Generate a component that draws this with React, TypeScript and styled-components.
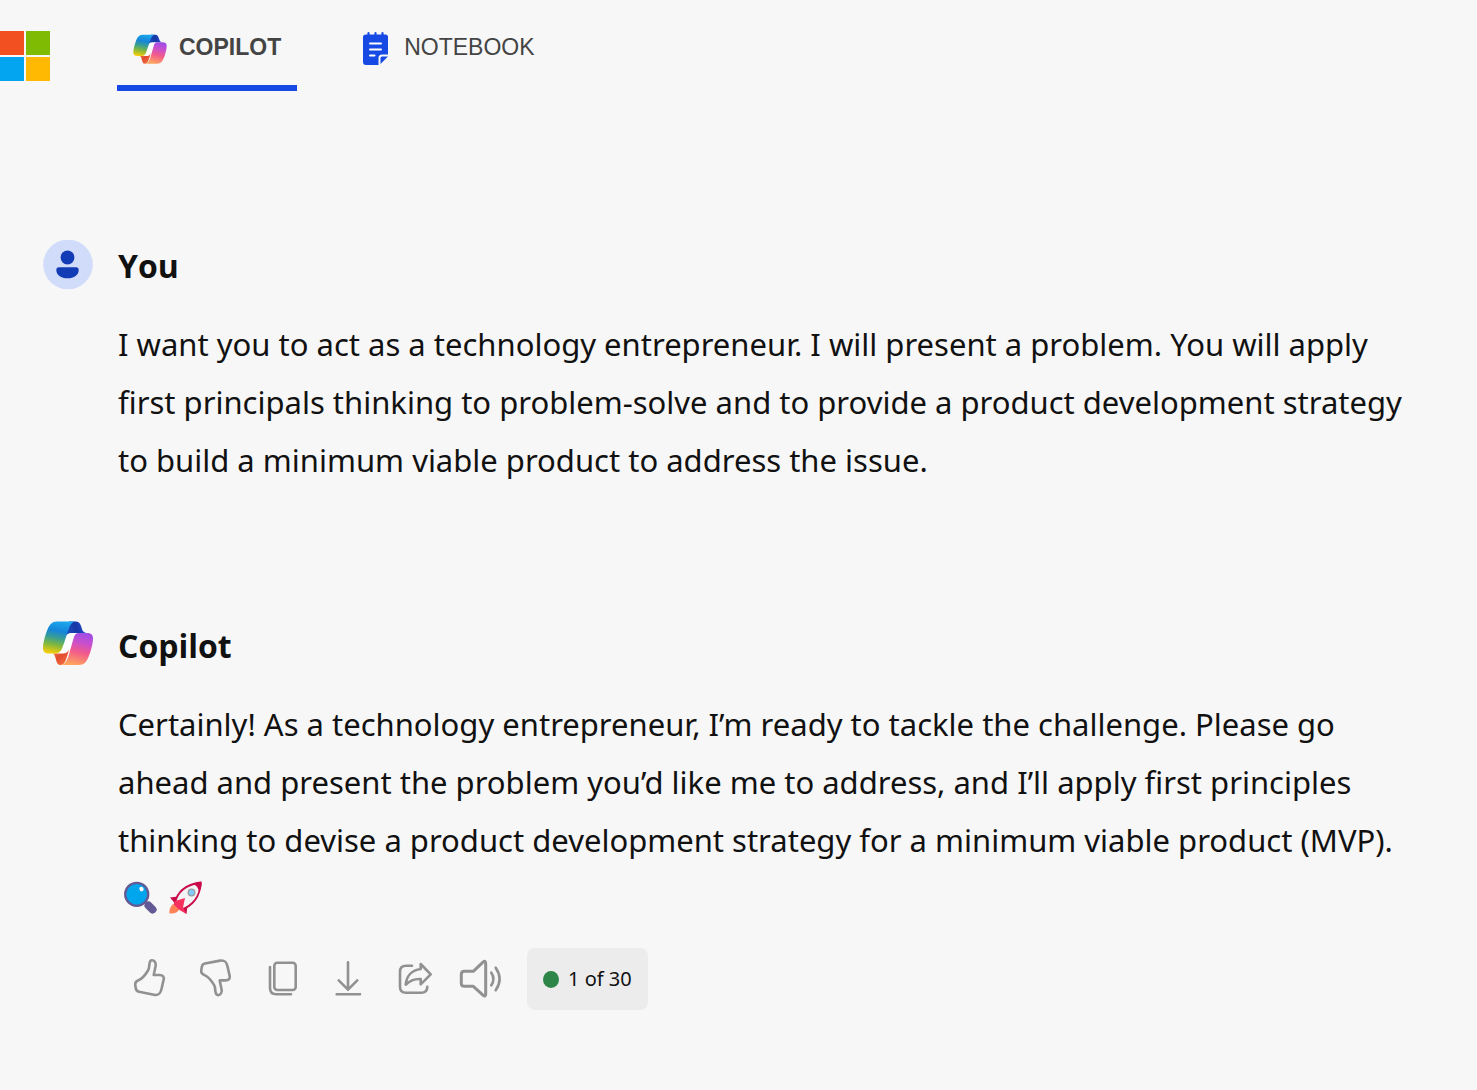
import React, { useId } from 'react';
import styled, { createGlobalStyle } from 'styled-components';

const GlobalStyle = createGlobalStyle`
  * { box-sizing: border-box; }
  body {
    margin: 0;
    background: #f7f7f7;
    color: #111111;
    font-family: 'Noto Sans', 'Open Sans', sans-serif;
  }
`;

const Header = styled.header`
  display: flex;
  align-items: flex-start;
  gap: 67px;
`;

const HomeLink = styled.a`
  display: grid;
  grid-template-columns: 24px 24px;
  grid-auto-rows: 24px;
  gap: 2px;
  width: 50px;
  margin-top: 31px;
`;

const Tile = styled.span<{ $color: string }>`
  background: ${({ $color }) => $color};
`;

const Tabs = styled.nav`
  display: flex;
  gap: 50px;
`;

const Tab = styled.a<{ $active?: boolean }>`
  display: flex;
  align-items: center;
  gap: ${({ $active }) => ($active ? 12 : 15)}px;
  height: 91px;
  padding: 8px 16px 0;
  border-bottom: 6px solid ${({ $active }) => ($active ? '#174ae4' : 'transparent')};
  color: #444444;
  font-family: 'Liberation Sans', Arial, sans-serif;
  font-size: 23px;
  font-weight: ${({ $active }) => ($active ? 700 : 400)};
  line-height: 28px;
  text-decoration: none;

  svg { display: block; flex: none; margin-top: 4px; }
`;

const Conversation = styled.main`
  display: flex;
  flex-direction: column;
  gap: 131px;
  padding: 149px 60px 80px 43px;
`;

const Message = styled.article`
  display: grid;
  grid-template-columns: 50px 1fr;
  column-gap: 25px;
`;

const Avatar = styled.div`
  svg { display: block; }
`;

const Author = styled.h2`
  margin: 2px 0 25px;
  font-family: 'Open Sans', 'Noto Sans', sans-serif;
  font-size: 32px;
  font-weight: 700;
  line-height: 48px;
`;

const Text = styled.p`
  margin: 0;
  font-size: 31px;
  line-height: 58px;
`;

const Emoji = styled.span`
  display: inline-flex;
  gap: 11px;
  padding-left: 6px;
  vertical-align: -5px;
`;

const Actions = styled.div`
  display: flex;
  margin-top: 21px;
`;

const ActionButton = styled.button`
  width: 66px;
  height: 62px;
  padding: 0;
  border: 0;
  background: none;
  color: #919191;
  cursor: pointer;

  svg { display: block; }
`;

const Counter = styled.div`
  display: flex;
  align-items: center;
  gap: 9px;
  height: 62px;
  margin-left: 13px;
  padding: 0 16px;
  border-radius: 8px;
  background: #ececec;
  font-size: 20px;
  line-height: 28px;
`;

const Dot = styled.span`
  width: 16px;
  height: 17px;
  border-radius: 50%;
  background: #2d8548;
`;

function CopilotLogo({ width, height }: { width: number; height: number }) {
  const id = useId();
  return (
    <svg width={width} height={height} viewBox="0 -1 50 45" aria-hidden="true">
      <defs>
        <linearGradient id={`${id}cool`} x1="0.55" y1="0" x2="0.35" y2="1">
          <stop offset="0" stopColor="#1aa7ec" />
          <stop offset="0.3" stopColor="#1685d8" />
          <stop offset="0.52" stopColor="#3a9f93" />
          <stop offset="0.74" stopColor="#80b83d" />
          <stop offset="1" stopColor="#f5cc0a" />
        </linearGradient>
        <linearGradient id={`${id}blue`} x1="0" y1="0.6" x2="1" y2="0.4">
          <stop offset="0" stopColor="#1b4fc4" />
          <stop offset="0.5" stopColor="#1737a5" />
          <stop offset="1" stopColor="#2450d8" />
        </linearGradient>
        <linearGradient id={`${id}warm`} x1="0.65" y1="0" x2="0.4" y2="1">
          <stop offset="0" stopColor="#a04de6" />
          <stop offset="0.28" stopColor="#c84fce" />
          <stop offset="0.58" stopColor="#f25a8c" />
          <stop offset="1" stopColor="#ffa65c" />
        </linearGradient>
        <linearGradient id={`${id}red`} x1="0" y1="0" x2="0.7" y2="1">
          <stop offset="0" stopColor="#f58a45" />
          <stop offset="0.5" stopColor="#e34a30" />
          <stop offset="1" stopColor="#f2703e" />
        </linearGradient>
      </defs>
      <path d="M23 11.5H36L28 32.5H12Z" fill="#fff" />
      <path d="M26 0H33C36.5 0 37.7 3 38.7 6.5C39.5 10 41 11.5 45 11.5H29C25 11.5 23 13 22 17Z" fill={`url(#${id}blue)`} />
      <path d="M10 32H19C23 32 25 31 26.5 27L23 38C21.5 42 20 43.5 17 43.5C12.5 43.5 13.5 34 10 32Z" fill={`url(#${id}red)`} />
      <path d="M14 0H33C28.500 0 26.500 5 25 9.500C23 15.500 21 22 19 27C17.500 30.500 15.500 32 11.500 32H6.500C2 32 0 30.500 0 26.500C0 22 2 14 4.500 8C6.500 3 9 0 14 0Z" fill={`url(#${id}cool)`} />
      <path d="M36 11.500H43.500C48 11.500 50 13 50 17C50 21.500 48 29.500 45.500 35.500C43.500 40.500 41 43.500 36 43.500H17.500C22 43.500 24 39 25.500 34.500L30.500 17C31.500 13.300 33 11.500 36 11.500Z" fill={`url(#${id}warm)`} />
    </svg>
  );
}

function NotebookIcon() {
  return (
    <svg width="26" height="34" viewBox="0 0 26 34" aria-hidden="true">
      <path d="M3 2.500H22.500Q25 2.500 25 5V22.500H19Q15.500 22.500 15.500 26V33H3Q0 33 0 30V5Q0 2.500 3 2.500Z" fill="#174ae4" />
      <path d="M17.500 32V26Q17.500 24.500 19 24.500H25Z" fill="#174ae4" />
      <path d="M5.500 1.200V4M12.500 1.200V4M19.500 1.200V4" stroke="#174ae4" strokeWidth="2.200" strokeLinecap="round" />
      <path d="M7 11.500H18M7 17.500H18M7 23.500H11.500" stroke="#fff" strokeWidth="2" strokeLinecap="round" />
    </svg>
  );
}

function PersonIcon() {
  return (
    <svg width="50" height="50" viewBox="0 0 50 50" role="img" aria-label="Your avatar">
      <circle cx="25" cy="24.500" r="24.800" fill="#d1dbfa" />
      <circle cx="24.500" cy="17.500" r="6.900" fill="#123bb6" />
      <path d="M16 27.200H33Q35.700 27.200 35.700 30C35.700 35 31 38.300 24.500 38.300S13.300 35 13.300 30Q13.300 27.200 16 27.200Z" fill="#123bb6" />
    </svg>
  );
}

function MagnifierEmoji() {
  return (
    <svg width="34" height="34" viewBox="0 0 34 34" role="img" aria-label="magnifying glass">
      <path d="M24.500 24.500L28.500 28.500" stroke="#635994" strokeWidth="8" strokeLinecap="round" />
      <path d="M20 20L24 24" stroke="#635994" strokeWidth="3" />
      <circle cx="12.700" cy="13.300" r="11.500" fill="#00a6ed" stroke="#635994" strokeWidth="2.300" />
      <ellipse cx="17.500" cy="8" rx="2" ry="2.300" transform="rotate(-35 17.500 8)" fill="#fff" />
    </svg>
  );
}

function RocketEmoji() {
  return (
    <svg width="34" height="34" viewBox="0 0 34 34" role="img" aria-label="rocket">
      <path d="M4 23C1 26 0 29 0.500 32.500C5 33 9 31.500 10.500 28Z" fill="#ff8257" />
      <path d="M1 16.500L9 15.500L6 22.500ZM17.500 33L18.500 24.500L12 29Z" fill="#ca0b4a" />
      <path d="M6 22C8 12 15 4 31.500 1.500C31.500 16 23 25 12.500 28.500Z" fill="#f4f4f4" stroke="#ca0b4a" strokeWidth="1.800" strokeLinejoin="round" />
      <path d="M24 3C27 1.500 30 0.800 32.500 0.800C33.300 4 32 8 30 11C29.500 7 27.500 4.500 24 3Z" fill="#ca0b4a" />
      <path d="M6 20L16 17L14 26.500L17.500 33L10.500 29L4.500 23.500Z" fill="#f8315f" />
      <circle cx="22.500" cy="11.500" r="3.300" fill="#83cbff" stroke="#9b9b9b" strokeWidth="1.300" />
    </svg>
  );
}

const thumb =
  'M35 12.300C37.500 12.300 38.900 14.500 38.700 17.500L36.700 27H42.500C46 27 47.300 28.700 46.600 31.800L44.500 41C43.400 46 41.500 47.600 37 46.800L22 43.800C20 43.400 19 42.200 18.700 40L18.200 36.500C18 34 19.500 33 21.500 32.300C25.500 30.500 28 27.500 31 22.500C32.500 20 32 18 32.500 15.500C32.800 13.500 33.300 12.300 35 12.300Z';

const actions: { label: string; drawing: React.ReactNode }[] = [
  { label: 'Like', drawing: <path d={thumb} /> },
  { label: 'Dislike', drawing: <path d={thumb} transform="matrix(1 0 0 -1 0 59.400)" /> },
  {
    label: 'Copy',
    drawing: (
      <>
        <rect x="25.300" y="14.700" width="21.400" height="27.300" rx="3" />
        <path d="M21 19V40C21 44.500 23 46.300 27.500 46.300H42" />
      </>
    ),
  },
  { label: 'Export', drawing: <path d="M33 14.300V41.700M23.700 32.300L33 41.700L42.300 32.300M21.700 46.300H45" /> },
  {
    label: 'Share',
    drawing: (
      <>
        <path d="M31 17.700H25Q19 17.700 19 23.700V38.700Q19 44.700 25 44.700H40.300Q46.300 44.700 46.300 38.700" />
        <path d="M39.700 16L49.700 26.300L39.700 36.300V31C33 30.500 29 32.500 24.700 36.700C25.500 28.500 30.500 22 39.700 21Z" />
      </>
    ),
  },
  {
    label: 'Read aloud',
    drawing: (
      <>
        <path strokeWidth="3" d="M17.300 23.300H26.300L36 14.200Q38.700 12 38.700 15.500V46Q38.700 49.500 36 47.200L26.300 38.300H17.300Q14.300 38.300 14.300 35.300V26.300Q14.300 23.300 17.300 23.300Z" />
        <path d="M44.300 24.700Q48.500 31 44.300 37.300M48.700 19.700Q56.500 31 48.700 42.300" />
      </>
    ),
  },
];

export default function App() {
  return (
    <>
      <GlobalStyle />
      <Header>
        <HomeLink href="#" aria-label="Microsoft">
          <Tile $color="#f35022" />
          <Tile $color="#80bb03" />
          <Tile $color="#03a5f0" />
          <Tile $color="#ffb903" />
        </HomeLink>
        <Tabs>
          <Tab href="#copilot" $active aria-current="page">
            <CopilotLogo width={34} height={30} />
            COPILOT
          </Tab>
          <Tab href="#notebook">
            <NotebookIcon />
            NOTEBOOK
          </Tab>
        </Tabs>
      </Header>
      <Conversation>
        <Message>
          <Avatar><PersonIcon /></Avatar>
          <div>
            <Author>You</Author>
            <Text>
              I want you to act as a technology entrepreneur. I will present a problem. You will apply
              first principals thinking to problem-solve and to provide a product development strategy
              to build a minimum viable product to address the issue.
            </Text>
          </div>
        </Message>
        <Message>
          <Avatar><CopilotLogo width={50} height={46} /></Avatar>
          <div>
            <Author>Copilot</Author>
            <Text>
              Certainly! As a technology entrepreneur, I’m ready to tackle the challenge. Please go
              ahead and present the problem you’d like me to address, and I’ll apply first principles
              thinking to devise a product development strategy for a minimum viable product (MVP).{' '}
              <Emoji>
                <MagnifierEmoji />
                <RocketEmoji />
              </Emoji>
            </Text>
            <Actions>
              {actions.map(({ label, drawing }) => (
                <ActionButton key={label} type="button" aria-label={label}>
                  <svg width="66" height="62" viewBox="1 0 66 62" fill="none" stroke="currentColor" strokeWidth="2.600" strokeLinecap="round" strokeLinejoin="round">
                    {drawing}
                  </svg>
                </ActionButton>
              ))}
              <Counter><Dot />1 of 30</Counter>
            </Actions>
          </div>
        </Message>
      </Conversation>
    </>
  );
}
